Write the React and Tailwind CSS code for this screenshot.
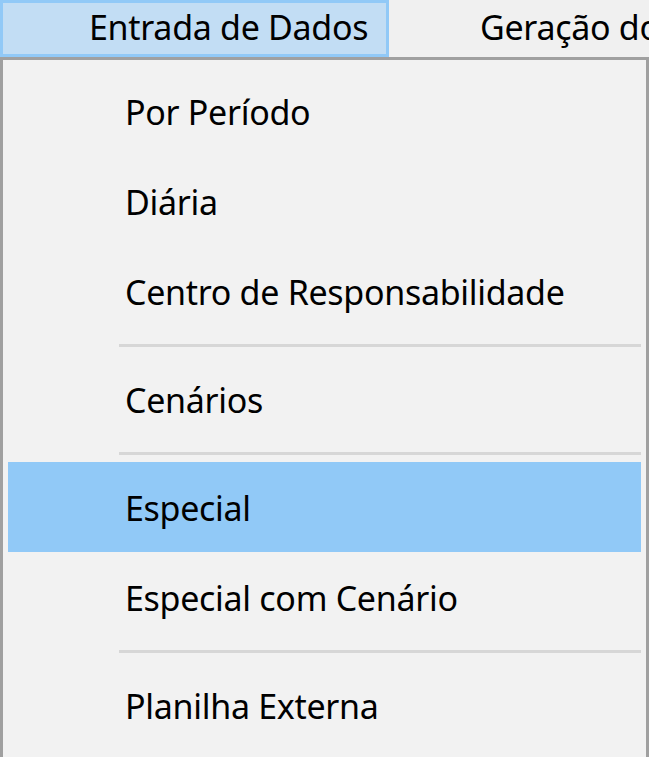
const items = [
  { label: "Por Período" },
  { label: "Diária" },
  { label: "Centro de Responsabilidade" },
  { sep: true },
  { label: "Cenários" },
  { sep: true },
  { label: "Especial", active: true },
  { label: "Especial com Cenário" },
  { sep: true },
  { label: "Planilha Externa" },
]

export default function App() {
  return (
    <div
      className="w-[649px] h-[757px] overflow-hidden bg-[#f2f2f2] text-black"
      style={{ fontFamily: '"Noto Sans", "Open Sans", sans-serif' }}
    >
      {/* menu bar */}
      <div className="flex h-[57px] bg-[#f0f0f0]">
        <div className="w-[389px] h-[57px] shrink-0 border-[3px] border-[#91c9f7] bg-[#c2ddf4] pl-[86px] flex items-center">
          <span className="text-[34px] leading-none tracking-[-0.3px] pb-[3px]">Entrada de Dados</span>
        </div>
        <div className="pl-[91px] flex items-center">
          <span className="text-[34px] leading-none tracking-[-0.3px] pb-[3px] whitespace-nowrap">Geração do</span>
        </div>
      </div>
      {/* dropdown */}
      <div className="border-t-[3px] border-l-[3px] border-r-[3px] border-[#a0a0a0] bg-[#f2f2f2] h-[700px] pt-[6px] pl-[5px] pr-[5px]">
        {items.map((it, i) =>
          it.sep ? (
            <div key={i} className="h-[18px] flex items-center pl-[111px]">
              <div className="h-[3px] w-full bg-[#d7d7d7]" />
            </div>
          ) : (
            <div
              key={i}
              className={
                "h-[90px] flex items-center pl-[117px] " +
                (it.active ? "bg-[#91c9f7]" : "")
              }
            >
              <span className="text-[34px] leading-none tracking-[-0.3px] pt-[1px] whitespace-nowrap">{it.label}</span>
            </div>
          )
        )}
      </div>
    </div>
  )
}
